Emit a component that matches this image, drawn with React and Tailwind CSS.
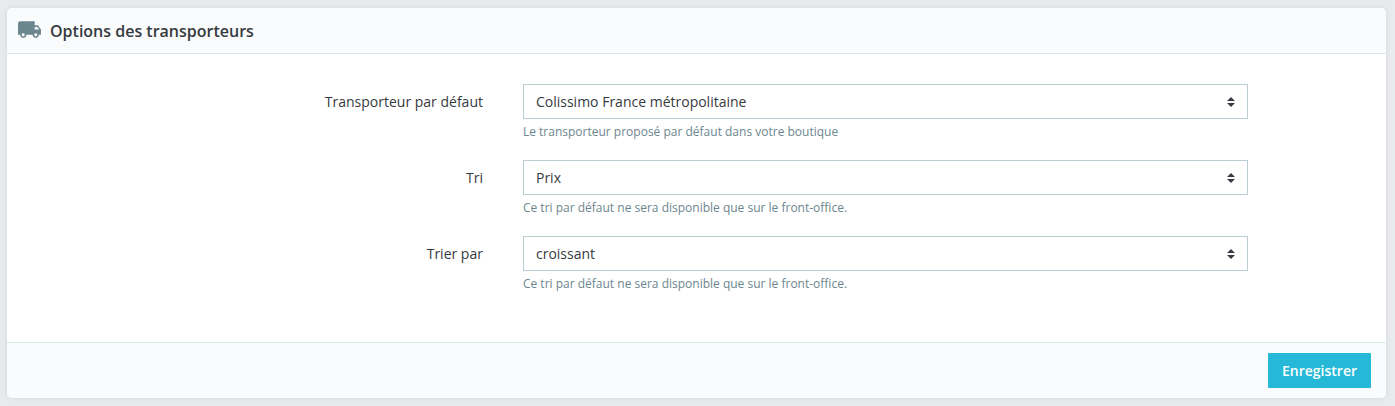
import React, { useState } from "react";
import { MdLocalShipping } from "react-icons/md";

const fields = [
  {
    id: "default-carrier",
    label: "Transporteur par défaut",
    options: ["Colissimo France métropolitaine"],
    help: "Le transporteur proposé par défaut dans votre boutique",
  },
  {
    id: "sort",
    label: "Tri",
    options: ["Prix", "Position"],
    help: "Ce tri par défaut ne sera disponible que sur le front-office.",
  },
  {
    id: "sort-by",
    label: "Trier par",
    options: ["croissant", "décroissant"],
    help: "Ce tri par défaut ne sera disponible que sur le front-office.",
  },
];

const SelectField = ({ id, label, options, help }) => {
  const [value, setValue] = useState(options[0]);

  return (
    <div className="grid grid-cols-[338fr_725fr] gap-10">
      <label htmlFor={id} className="text-right text-sm leading-[35px]">
        {label}
      </label>
      <div>
        <div className="relative">
          <select
            id={id}
            value={value}
            onChange={(e) => setValue(e.target.value)}
            aria-describedby={`${id}-help`}
            className="block h-[35px] w-full appearance-none border border-[#bbcdd2] bg-white px-3 pr-8 text-sm"
          >
            {options.map((option) => (
              <option key={option}>{option}</option>
            ))}
          </select>
          {/* Up / down arrows */}
          <svg
            className="pointer-events-none absolute top-3 right-[13px] h-3 w-2"
            viewBox="0 0 8 12"
            fill="#363a41"
            aria-hidden="true"
          >
            <path d="M4 1L8 5H0zM4 11L0 7h8z" />
          </svg>
        </div>
        <p id={`${id}-help`} className="mt-1 text-xs leading-[17px] text-[#6c868e]">
          {help}
        </p>
      </div>
    </div>
  );
};

const App = () => {
  return (
    <main className="min-h-screen bg-[#e8eaec] px-[7px] py-2 pr-[9px] font-['Open_Sans',sans-serif] text-[#363a41]">
      <form
        onSubmit={(e) => e.preventDefault()}
        className="overflow-hidden rounded-[5px] bg-white shadow-[0_0_4px_rgba(54,58,65,0.12)]"
      >
        <header className="flex h-[46px] items-center gap-2 border-b border-[#dbe6e9] bg-[#fafbfc] px-2.5">
          <MdLocalShipping className="mb-0.5 size-[25px] text-[#6c868e]" />
          <h3 className="text-base font-semibold">Options des transporteurs</h3>
        </header>

        <div className="flex flex-col gap-5 px-[10%] pt-[30px] pb-[50px]">
          {fields.map((field) => (
            <SelectField key={field.id} {...field} />
          ))}
        </div>

        <footer className="flex justify-end border-t border-[#dbe6e9] bg-[#fafbfc] px-[15px] py-2.5">
          <button
            type="submit"
            className="h-[35px] rounded-[1px] bg-[#25b9d7] px-3.5 text-sm font-semibold text-white hover:bg-[#1f9db6]"
          >
            Enregistrer
          </button>
        </footer>
      </form>
    </main>
  );
};

export default App;
